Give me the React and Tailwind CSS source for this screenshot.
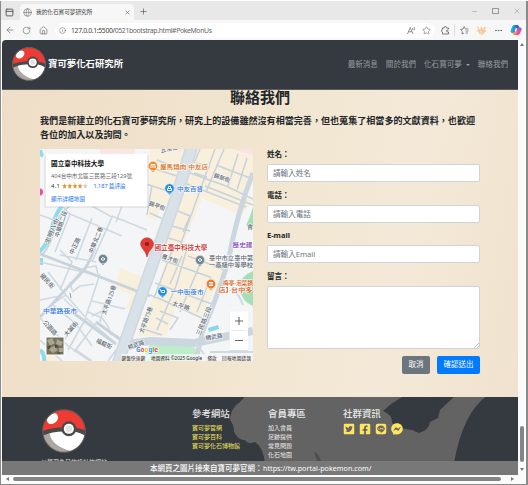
import React from "react";
import {
  ArrowLeft, RotateCw, House, Info, Star, Globe, X, Plus, Minus, Square, PanelTop, Ellipsis,
} from "lucide-react";
import { FaTwitterSquare, FaFacebookSquare, FaLine, FaFacebookMessenger } from "react-icons/fa";

function PokeBall({ className }) {
  return (
    <svg viewBox="0 0 100 100" className={className}>
      <circle cx="50" cy="50" r="48.500" fill="#fff" />
      <path d="M2 56 L17 55 Q22 84 66 95.500 A48.500 48.500 0 0 1 2 56Z" fill="#aca7a4" />
      <path d="M1.500 50 A48.500 48.500 0 0 1 98.500 50 L92 54 Q50 36 8 56Z" fill="#ee3b33" />
      <path d="M1.500 50 Q24 41 48 42 L74 42 Q88 44 98.500 49 L98 60 Q88 54 74 51 L48 51 Q24 51 3 60Z" fill="#4a4a4c" />
      <ellipse cx="24" cy="22" rx="14" ry="10.500" transform="rotate(-40 24 22)" fill="#fff" />
      <circle cx="61" cy="45" r="17" fill="#4a4a4c" />
      <circle cx="61" cy="45" r="11.500" fill="#fff" />
      <circle cx="61" cy="45" r="7.500" fill="#e3e3e3" />
      <circle cx="50" cy="50" r="48.500" fill="none" stroke="#5a5553" strokeWidth="2.500" />
    </svg>
  );
}

function TabStrip() {
  return (
    <div className="flex h-[19px] items-end bg-[#e8e8e8] text-[#555]">
      <div className="flex h-full w-[19px] items-center pt-[3px] pl-[4px]">
        <PanelTop className="size-[9px]" strokeWidth={2.4} />
      </div>
      <div className="flex h-[16px] w-[114px] items-center rounded-t-[4px] bg-[#f7f7f7] pl-[3px]">
        <Globe className="size-[9px] shrink-0 text-[#777]" strokeWidth={1.7} />
        <span className="ml-[4px] w-[60px] text-[5.65px] whitespace-nowrap text-[#444]">我的化石寶可夢研究所</span>
        <X className="ml-auto mr-[3px] size-[7px]" strokeWidth={2} />
      </div>
      <Plus className="mb-[4px] ml-[5px] size-[9px]" strokeWidth={1.8} />
      <div className="mr-[5px] mb-[5px] ml-auto flex items-center gap-[14px] text-[#999]">
        <Minus className="size-[7px]" strokeWidth={2} />
        <svg className="h-[6px] w-[7px]" viewBox="0 0 7 6" fill="none" stroke="currentColor">
          <rect x="0.500" y="0.500" width="6" height="5" />
        </svg>
        <X className="size-[8px]" strokeWidth={1.8} />
      </div>
    </div>
  );
}

function AddressBar() {
  return (
    <div className="flex h-[20px] items-center bg-[#f7f7f7] text-[#666]">
      <ArrowLeft className="ml-[4px] size-[10px]" strokeWidth={1.6} />
      <RotateCw className="ml-[7px] size-[9px]" strokeWidth={1.6} />
      <House className="ml-[8px] size-[9px]" strokeWidth={1.7} />
      <div className="ml-[7px] flex h-[15px] w-[380px] items-center rounded-full bg-white pr-[4px] pl-[4px]">
        <Info className="size-[7px] shrink-0" strokeWidth={1.8} />
        <svg className="ml-[5px] h-[12px] w-[144px]" viewBox="0 0 144 12">
          <text x="0" y="8.800" fontSize="6.900" textLength="141" fill="#444">
            127.0.0.1:5500/<tspan fill="#666">0521bootstrap.html#PokeMonUs</tspan>
          </text>
        </svg>
        <svg className="ml-auto size-[9px]" viewBox="0 0 18 18" fill="none" stroke="currentColor" strokeWidth="1.400">
          <path d="M1 16 L6.500 3 L12 16 M3 11.500 H10 M11 4 Q12.500 6 11 8 M14 2 Q16.500 6 14 9" />
        </svg>
        <Star className="ml-[6px] size-[9px]" strokeWidth={1.5} />
      </div>
      <svg className="ml-[6px] size-[9px]" viewBox="0 0 18 18" fill="none" stroke="currentColor" strokeWidth="1.700" strokeLinejoin="round">
        <path d="M15 6 V4 H11 Q11 1 8.500 1 Q6 1 6 4 H3 V7 Q1 7 1 9.500 Q1 12 3 12 V16 H15 V12 M15 8 Q11 7 11 10 Q11 12.500 15 12" />
      </svg>
      <div className="ml-[4px] h-[12px] w-px bg-[#ddd]" />
      <svg className="ml-[5px] size-[9px]" viewBox="0 0 18 18" fill="none" stroke="currentColor" strokeWidth="1.500" strokeLinejoin="round">
        <path d="M11 6 L8.500 1 L6 6 L1 7 L4.500 11 L4 16 L8 14 M11 6 H17 M11 10 H17 M11 14 H16" />
      </svg>
      <svg className="ml-[7px] size-[11px]" viewBox="0 0 22 22">
        <path d="M2 2 Q6 3 7 9 L9 8 L10 2 L13 8 Q16 3 20 4 L18 10 L21 12 L17 15 Q14 21 9 19 Q5 18 5 14 L1 11 L5 10Z" fill="#f6c796" />
        <path d="M8 12 L13 15 M14 10 L17 8 M7 16 L12 18" stroke="#fff0dc" strokeWidth="1.400" />
      </svg>
      <Ellipsis className="ml-[7px] size-[9px]" strokeWidth={2.2} />
      <svg className="ml-[7px] size-[12px]" viewBox="0 0 24 24">
        <path d="M8 2 H15 Q17 2 18 6 L19 8 H13 L10 17 Q8 18 5 18 Q0 17 2 12 L5 5 Q6 2 8 2Z" fill="#1d8ff0" />
        <path d="M2 12 L5 5 Q6 2 9 2 Q6 8 6 14 Q5 18 3 17 Q0 16 2 12Z" fill="#25b9a5" />
        <path d="M5 17 L9 17 L12 12 L14 7 H20 Q25 8 22 14 L20 19 Q18 22 15 22 H10 Q7 22 6 19Z" fill="#e5509b" />
        <path d="M5 17 H10 L12 12 L14 18 L10 22 Q7 22 6 19Z" fill="#f9a03f" />
        <path d="M14 7 H20 Q24 8 22 13 L18 12Z" fill="#9a58dd" />
        <path d="M15 2 Q17 2 18 7 L13 8 L11 3Z" fill="#2d5bd8" />
        <path d="M11 9 H14 L12.500 15 H9.500Z" fill="#fff" />
      </svg>
    </div>
  );
}

function NavBar() {
  return (
    <nav className="flex h-[50px] items-center rounded-tl-[4px] border-b border-[#5b5c5d] bg-[#343a40] pl-[10px] text-[#9a9da0]">
      <PokeBall className="-mt-px size-[34px]" />
      <span className="ml-[2px] text-[9.4px] font-bold whitespace-nowrap text-white">寶可夢化石研究所</span>
      <div className="mr-[10px] ml-auto flex items-center text-[7.55px] whitespace-nowrap">
        <span>最新消息</span>
        <span className="ml-[8px]">關於我們</span>
        <span className="ml-[8px]">化石寶可夢</span>
        <span className="ml-[4px] border-x-[2px] border-t-[2px] border-x-transparent border-t-[#9a9da0]" />
        <span className="ml-[8px]">聯絡我們</span>
      </div>
    </nav>
  );
}

const minorRoads =
  "M62 206 L70 214 L55 252 M40 215 L62 223 M70 214 L122 236 M92 206 L112 217 L92 262 M122 206 L116 222 M76 260 L92 218 M112 216 L147 230 M40 262 L92 274 L150 296 M60 255 L96 262 M100 274 L86 316 M92 301 L125 309 M48 272 L66 295 L86 318 L112 340 M40 300 L60 296 L84 268 M66 295 L52 304 M60 250 L72 262 L60 290 M64 299 L78 312 M52 304 L76 324 L92 346 M76 324 L60 345 M86 318 L68 350 M96 323 L74 352 M40 318 L68 346 L90 361 M40 340 L62 361 M72 292 L80 286 L94 284 M72 290 L70 282 M88 312 L102 318 L108 326 L110 334 M104 305 L100 322 M110 334 L118 336 M92 316 L104 310 M84 268 L96 266 L98 274 M76 350 L92 361 M108 361 L116 350";
const gridRoads =
  "M146 166 L186 179 M146 184 L180 195 M157 160 L188 172 M190 173 L226 186 L253 199 M187 184 L246 207 M205 186 L253 205 M200 149 L194 163 M215 149 L180 246 M224 149 L206 192 M238 154 L228 186 M247 158 L237 190 M216 165 L250 178 M152 185 L147 215 M178 211 L190 216 L183 232 M172 226 L190 231 M168 238 L182 242 M196 163 L210 167 M194 173 L207 177 M150 213 L163 219 M162 260 L210 277 M155 283 L212 304 M147 294 L158 298 L206 320 M188 245 L176 286 L157 330 M172 251 L154 298 M200 264 L180 312 M211 277 L197 312 M182 256 L170 284 M160 311 L178 318 L170 330 M156 318 L168 324 M140 328 L162 335 M225 270 L188 256";

function Label({ x, y, w, r = 0, size = 6, fill = "#5c6974", children }) {
  return (
    <text
      x={x} y={y} fontSize={size} fill={fill} fontWeight={500}
      textLength={w} lengthAdjust="spacingAndGlyphs" textAnchor="middle" dominantBaseline="central"
      transform={`rotate(${r} ${x} ${y})`} stroke="#fff" strokeWidth="1" paintOrder="stroke"
    >
      {children}
    </text>
  );
}

function Marker({ x, y, fill, d }) {
  return (
    <g>
      <path d={`M${x - 3} ${y + 3} L${x} ${y + 6.2} L${x + 3} ${y + 3}Z`} fill={fill} />
      <circle cx={x} cy={y} r="4.700" fill={fill} stroke="#fff" strokeWidth="0.5" />
      <path transform={`translate(${x} ${y})`} d={d} fill="none" stroke="#fff" strokeWidth="1" />
    </g>
  );
}

function CampusMap() {
  return (
    <svg viewBox="40 149 213 212" className="h-[212px] w-[213px] bg-[#f4f5f7]">
      <g fill="#f8efdc">
        <path d="M147 149 H253 V172 L240 215 L204 198 L179 257 L150 246 V149Z" />
        <path d="M179 245 L228 264 L200 318 L176 306 L166 336 H138 L156 290 L170 248Z" />
        <path d="M190 173 L253 200 L239 218 L202 198 L181 250 L164 244Z" />
        <path d="M120 268 L147 278 L136 312 L126 308 L132 295 L115 288Z" />
        <path d="M128 345 L136 340 L130 352 Z M62 361 L52 350 L42 356 V361Z" />
      </g>
      <path d="M202 198 L236 213 L226 237 L220 262 L181 250Z" fill="#f5f5f7" />
      <path d="M147 206 H166 L152 246 L145 250Z" fill="#f4f5f7" />
      <path d="M148 206 H160 L157 220 L148 217Z" fill="#f8efdc" />
      <path d="M253 207 Q249 220 246 225 L253 229Z M253 271 Q240 276 239 288 Q242 302 253 306Z" fill="#a5dfb8" />
      <path d="M144 361 Q146 342 160 341 L186 344 Q198 346 202 361Z" fill="#bdedcb" />
      <path d="M100 149 H135 V155 H100Z M183 149 H160 V152 H183Z" fill="#f9e7e8" />
      <path d="M232 149 L253 155 V149Z" fill="#fae1e4" />
      <g fill="none">
        <path d="M62 206 Q54 215 51 232 Q47 245 39 252 M43 156 Q41 155 40 150 M44 361 Q45 354 40 350 M41 258 V265" stroke="#8fdaec" strokeWidth="4" />
        <path d="M70 206 Q57 214 54 232 Q50 246 42 255" stroke="#c6d5dd" strokeWidth="2" />
        <path d={minorRoads} stroke="#ced9e1" strokeWidth="1.600" />
        <path d={gridRoads} stroke="#c7d3dc" strokeWidth="1.500" />
        <path d="M95 248 Q89 263 84 270 L40 317 M40 254 L150 296 M96 322 L128 345 M72 312 L116 344" stroke="#c8d3dc" strokeWidth="2.800" />
        <path d="M253 173 Q240 205 231 247 Q228 270 202 333 L196 361" stroke="#ccd6df" strokeWidth="5" />
        <path d="M120 345 L150 341 L195 343 L253 331" stroke="#cbd6de" strokeWidth="8" />
        <path d="M195 344 Q204 351 207 361 M232 288 Q240 296 243 305 M210 352 H253" stroke="#d0dae2" strokeWidth="2" />
        <path d="M192 146 L176 198 L154 260 L124 345 L118 363" stroke="#ced8e0" strokeWidth="12.500" />
        <path d="M192 146 L176 198 L154 260 L124 345 L118 363" stroke="#d8e1e7" strokeWidth="9.500" />
      </g>
      <path d="M208 328 L218 325 L219 329 L209 332Z" fill="#8ad5e6" />
      <path d="M71 298 L70 293" stroke="#71808b" strokeWidth="0.800" />

      <Label x={52} y={231} w={27} r={-68}>忠明八街</Label>
      <Label x={61} y={224} w={27} r={-72}>中華路二段</Label>
      <Label x={75} y={246} w={18} r={-65}>中正路</Label>
      <Label x={96} y={240} w={28} r={-68}>中華北二巷</Label>
      <Label x={157} y={206} w={17} r={20}>錦平街</Label>
      <Label x={222} y={178} w={17} r={20}>錦新街</Label>
      <Label x={169} y={149} w={17} r={-12}>五常街</Label>
      <Label x={170} y={259} w={17} r={20}>育才街</Label>
      <Label x={181} y={306} w={18} r={18}>太平路</Label>
      <Label x={204} y={321} w={31} r={-68}>三民路三段</Label>
      <Label x={214} y={337} w={17} r={-10}>精武路</Label>
      <Label x={146} y={320} w={28} r={-70}>太平路75巷</Label>
      <Label x={109} y={300} w={31} r={-70}>太平路125巷</Label>
      <Label x={104} y={344} w={17} r={24}>福龍街</Label>
      <Label x={71} y={329} w={18} r={-48}>大誠街</Label>
      <Label x={50} y={328} w={18} r={48}>公園路</Label>
      <Label x={47} y={281} w={18} r={48}>健民街</Label>
      <Label x={136} y={345} w={17} r={-20}>精武路</Label>
      <Label x={250} y={227} w={6}>會</Label>

      <Label x={184} y={167} w={48} fill="#d8690f">屋馬燒肉 中友店</Label>
      <Label x={190} y={189} w={26} fill="#2c73d8">中友百貨</Label>
      <Label x={181} y={247} w={53} size={7} fill="#c52825">國立臺中科技大學</Label>
      <Label x={242.5} y={245} w={20} fill="#8344bb">歷史建</Label>
      <Label x={231} y={257.5} w={44}>臺中市立臺中第</Label>
      <Label x={231} y={264.5} w={44}>一高級中等學校</Label>
      <Label x={187} y={292} w={33} fill="#2c73d8">一中街夜市</Label>
      <Label x={238} y={282.5} w={30} fill="#d8590f">梅亭·泡菜鍋</Label>
      <Label x={235.5} y={289.5} w={34} fill="#d8590f">店】·台中多</Label>
      <Label x={60} y={311} w={34} fill="#2c73d8">中華路夜市</Label>

      <Marker x={153} y={166} fill="#ef8a2c" d="M-2 2V-1.500H2V2M0 -1.500V2" />
      <Marker x={169.5} y={188.5} fill="#1a8cf5" d="M-2 0H2V2H-2Z M-1 0V-2H1V0" />
      <Marker x={162.5} y={291.5} fill="#1a8cf5" d="M-3 -2H-2L-1 1H2L2 -1H-1" />
      <Marker x={211} y={284} fill="#ee7930" d="M-2 0H2M-2 -1.500H2M-2 1.500H2" />
      <Marker x={103} y={259} fill="#718694" d="M-2 0L0 -1.500L2 0L0 1.500Z" />
      <Marker x={200} y={260} fill="#718694" d="M-2 0L0 -1.500L2 0L0 1.500Z" />
      <circle cx="39.500" cy="192" r="3.500" fill="#e64fb0" />
      <path d="M147 257 Q146 252 142.500 248.500 A6.300 6.300 0 1 1 151.500 248.500 Q148 252 147 257Z" fill="#e53a33" stroke="#b92c27" strokeWidth="0.600" />
      <circle cx="147" cy="244" r="2.100" fill="#8c1d18" />

      <rect x="44.500" y="155" width="104" height="52.500" fill="#000" opacity="0.12" />
      <rect x="45.500" y="154" width="102" height="52.500" fill="#fff" />
      <text x="51" y="165.500" fontSize="6.600" fontWeight="700" textLength="53" fill="#111">國立臺中科技大學</text>
      <text x="51" y="177.500" fontSize="5.600" textLength="81" lengthAdjust="spacingAndGlyphs" fill="#666">404台中市北區三民路三段129號</text>
      <text x="51" y="187.500" fontSize="6" textLength="9" fill="#333">4.1</text>
      <text x="62" y="187.500" fontSize="6.500" textLength="26" lengthAdjust="spacingAndGlyphs" fill="#ee8b16">★★★★<tspan fill="#ccc">★</tspan></text>
      <text x="93.500" y="187.500" fontSize="5.600" textLength="32" lengthAdjust="spacingAndGlyphs" fill="#1a73e8">1,187 篇評論</text>
      <text x="51" y="200.500" fontSize="5.600" textLength="34" fill="#1a73e8">顯示詳細地圖</text>

      <rect x="45.500" y="336.500" width="19" height="19" rx="1" fill="#fff" />
      <rect x="46.500" y="337.500" width="17" height="17" fill="#77735f" />
      <path d="M47 340 L52 338 L55 343 L50 346Z M57 339 L63 342 L61 346 L56 344Z M48 349 L54 346 L58 350 L53 353Z M59 348 H63 V352 H59Z" fill="#aaa58e" />
      <path d="M47 347 L51 345 L49 350Z M55 344 L59 347 L55 348Z M58 352 L62 353 L57 354Z" fill="#4a4c40" />

      <rect x="229.500" y="312" width="18.500" height="39" fill="#000" opacity="0.1" />
      <rect x="229.500" y="311.500" width="18.500" height="38.500" fill="#fff" />
      <path d="M232 330.500 H245.500" stroke="#e3e3e3" strokeWidth="0.800" />
      <path d="M235 321 H243 M239 317 V325 M235 340.500 H243" stroke="#666" strokeWidth="1.100" />

      <rect x="121" y="354" width="132" height="7" fill="#f5f5f5" opacity="0.85" />
      <g fontSize="4.600" fill="#222">
        <text x="121.500" y="359.500" textLength="23.500">鍵盤快速鍵</text>
        <text x="151" y="359.500" textLength="51" lengthAdjust="spacingAndGlyphs">地圖資料 ©2025 Google</text>
        <text x="207.500" y="359.500" textLength="9">條款</text>
        <text x="222" y="359.500" textLength="29">回報地圖錯誤</text>
      </g>
      <text x="136" y="351.500" fontSize="7.500" fontWeight="700" textLength="22" lengthAdjust="spacingAndGlyphs" stroke="#fff" strokeWidth="1" paintOrder="stroke" fill="#4285f4">
        G<tspan fill="#ea4335">o</tspan><tspan fill="#fbbc05">o</tspan>g<tspan fill="#34a853">l</tspan><tspan fill="#ea4335">e</tspan>
      </text>
    </svg>
  );
}

function Field({ label, placeholder }) {
  return (
    <label className="mb-[7.5px] flex flex-col">
      <span className="h-[15px] text-[7.5px] leading-[10px] font-bold text-[#212529]">{label}</span>
      <input
        placeholder={placeholder}
        className="h-[18px] rounded-[2px] border border-[#ced4da] bg-white px-[5px] text-[7.6px] placeholder:text-[#6c757d]"
      />
    </label>
  );
}

function ContactForm() {
  return (
    <form className="flex w-[213px] flex-col">
      <Field label="姓名：" placeholder="請輸入姓名" />
      <Field label="電話：" placeholder="請輸入電話" />
      <Field label="E-mail" placeholder="請輸入Email" />
      <label className="relative flex flex-col">
        <span className="h-[15.5px] text-[7.5px] leading-[10px] font-bold text-[#212529]">留言：</span>
        <textarea className="h-[63px] resize-none rounded-[2px] border border-[#ced4da] bg-white" />
        <svg className="absolute right-[1px] bottom-[1px] size-[5px]" viewBox="0 0 5 5" stroke="#999" strokeWidth="0.600">
          <path d="M0 5 L5 0 M3 5 L5 3" />
        </svg>
      </label>
      <div className="mt-[7px] flex justify-end gap-[7px] text-[7.5px] text-white">
        <button type="button" className="h-[18px] w-[28px] rounded-[2px] bg-[#6c757d]">取消</button>
        <button type="button" className="h-[18px] w-[43px] rounded-[2px] bg-[#007bff]">確認送出</button>
      </div>
    </form>
  );
}

function ContactSection() {
  return (
    <section className="h-[307px] bg-[linear-gradient(100deg,#efdec7_0%,#f0e2cc_30%,#f2e7d2_55%,#f4e9d8_75%,#f0e2ce_100%)] pr-[38px] pl-[38px] text-[#212529]">
      <h2 className="text-center text-[15px] leading-[14px] font-bold">聯絡我們</h2>
      <p className="mt-[10px] text-[9.07px] leading-[13.5px] font-bold whitespace-nowrap">
        我們是新建立的化石寶可夢研究所，研究上的設備雖然沒有相當完善，但也蒐集了相當多的文獻資料，也歡迎
        <br />
        各位的加入以及詢問。
      </p>
      <div className="mt-[8px] flex gap-[14px]">
        <CampusMap />
        <ContactForm />
      </div>
    </section>
  );
}

function LinkColumn({ title, links, className }) {
  return (
    <div className={className}>
      <h3 className="text-[9.45px] leading-[12px] font-medium whitespace-nowrap text-[#e9eaea]">{title}</h3>
      <ul className="mt-[4px] text-[6px] leading-[9px] whitespace-nowrap">
        {links.map((link) => (
          <li key={link}>{link}</li>
        ))}
      </ul>
    </div>
  );
}

function SiteFooter() {
  return (
    <footer className="relative h-[64px] overflow-hidden bg-[#343a40]">
      <svg className="absolute inset-0 h-[64px] w-[516px]" viewBox="2 397 516 64">
        <g className="blur-[0.7px]">
          <path d="M246 395 Q241 402 236 405 Q230 412 230 420 Q234 425 234 432 Q239 441 245 440 Q248 445 255 442 Q263 447 265 463 H454 Q463 412 488 395Z" fill="#636363" />
          <path d="M405 395 L391 404 L383 411 Q393 415 392 423 L399 428 L412 430 L419 433 Q429 430 430 422 L438 418 L440 410 L456 395Z" fill="#343a40" />
          <path d="M314 452 Q319 453 321 461 H317Z" fill="#4d5052" />
        </g>
      </svg>
      <div className="relative flex">
        <div className="w-[151px] pt-[12px] pl-[39px]">
          <PokeBall className="ml-px size-[44px]" />
          <p className="mt-[5px] text-[6px] leading-[9px] whitespace-nowrap text-[#ddd]">以學習為目的設計的網站</p>
        </div>
        <LinkColumn
          className="w-[76px] pt-[11px] pl-[39px] text-[#f5e45b]"
          title="參考網站"
          links={["寶可夢官網", "寶可夢百科", "寶可夢化石博物館"]}
        />
        <LinkColumn
          className="w-[75px] pt-[11px] pl-[39px] text-[#eee]"
          title="會員專區"
          links={["加入會員", "足跡提供", "常見問題", "化石地圖"]}
        />
        <div className="pt-[11px] pl-[39px]">
          <h3 className="text-[9.45px] leading-[12px] font-medium whitespace-nowrap text-[#e9eaea]">社群資訊</h3>
          <div className="mt-[3px] flex gap-[4px] text-[12px] text-[#ffe45e]">
            <FaTwitterSquare />
            <FaFacebookSquare />
            <FaLine />
            <FaFacebookMessenger />
          </div>
        </div>
      </div>
    </footer>
  );
}

function VerticalScrollbar() {
  return (
    <div className="flex w-[8px] flex-col items-center bg-[#fbfbfb]">
      <span className="mt-[3px] border-x-[2px] border-b-[3px] border-x-transparent border-b-[#777]" />
      <span className="mt-[380px] h-[36px] w-[4px] rounded-full bg-[#858585]" />
      <span className="mt-[6px] border-x-[2px] border-t-[3px] border-x-transparent border-t-[#777]" />
    </div>
  );
}

export default function App() {
  return (
    <div className="flex h-[485px] w-[528px] flex-col overflow-hidden bg-white pt-px font-['Noto_Sans','Noto_Sans_CJK_TC',sans-serif]">
      <div className="flex h-[484px] flex-col overflow-hidden border-r-[2px] border-b border-l border-[#8a8a8a] bg-[#fbfbfb]">
        <TabStrip />
        <AddressBar />
        <div className="flex pl-px">
          <main className="w-[516px]">
            <NavBar />
            <ContactSection />
            <SiteFooter />
            <div className="h-[14px] bg-[#787878] pl-[148px]">
              <svg className="h-[14px] w-[224px]" viewBox="0 0 224 14">
                <text x="0" y="10" fontSize="7.500" fontWeight="500" fill="#fff" textLength="112.500">本網頁之圖片接來自寶可夢官網：</text>
                <text x="113" y="10" fontSize="7.500" fill="#fff" textLength="108.500" lengthAdjust="spacingAndGlyphs">https://tw.portal-pokemon.com/</text>
              </svg>
            </div>
          </main>
          <VerticalScrollbar />
        </div>
        <div className="flex h-[8px] shrink-0 items-center bg-[#fbfbfb] pl-[5px]">
          <span className="border-y-[2px] border-r-[3px] border-y-transparent border-r-[#777]" />
          <span className="ml-[4px] h-[4px] w-[488px] rounded-full bg-[#858585]" />
          <span className="ml-[10px] border-y-[2px] border-l-[3px] border-y-transparent border-l-[#777]" />
        </div>
      </div>
    </div>
  );
}
